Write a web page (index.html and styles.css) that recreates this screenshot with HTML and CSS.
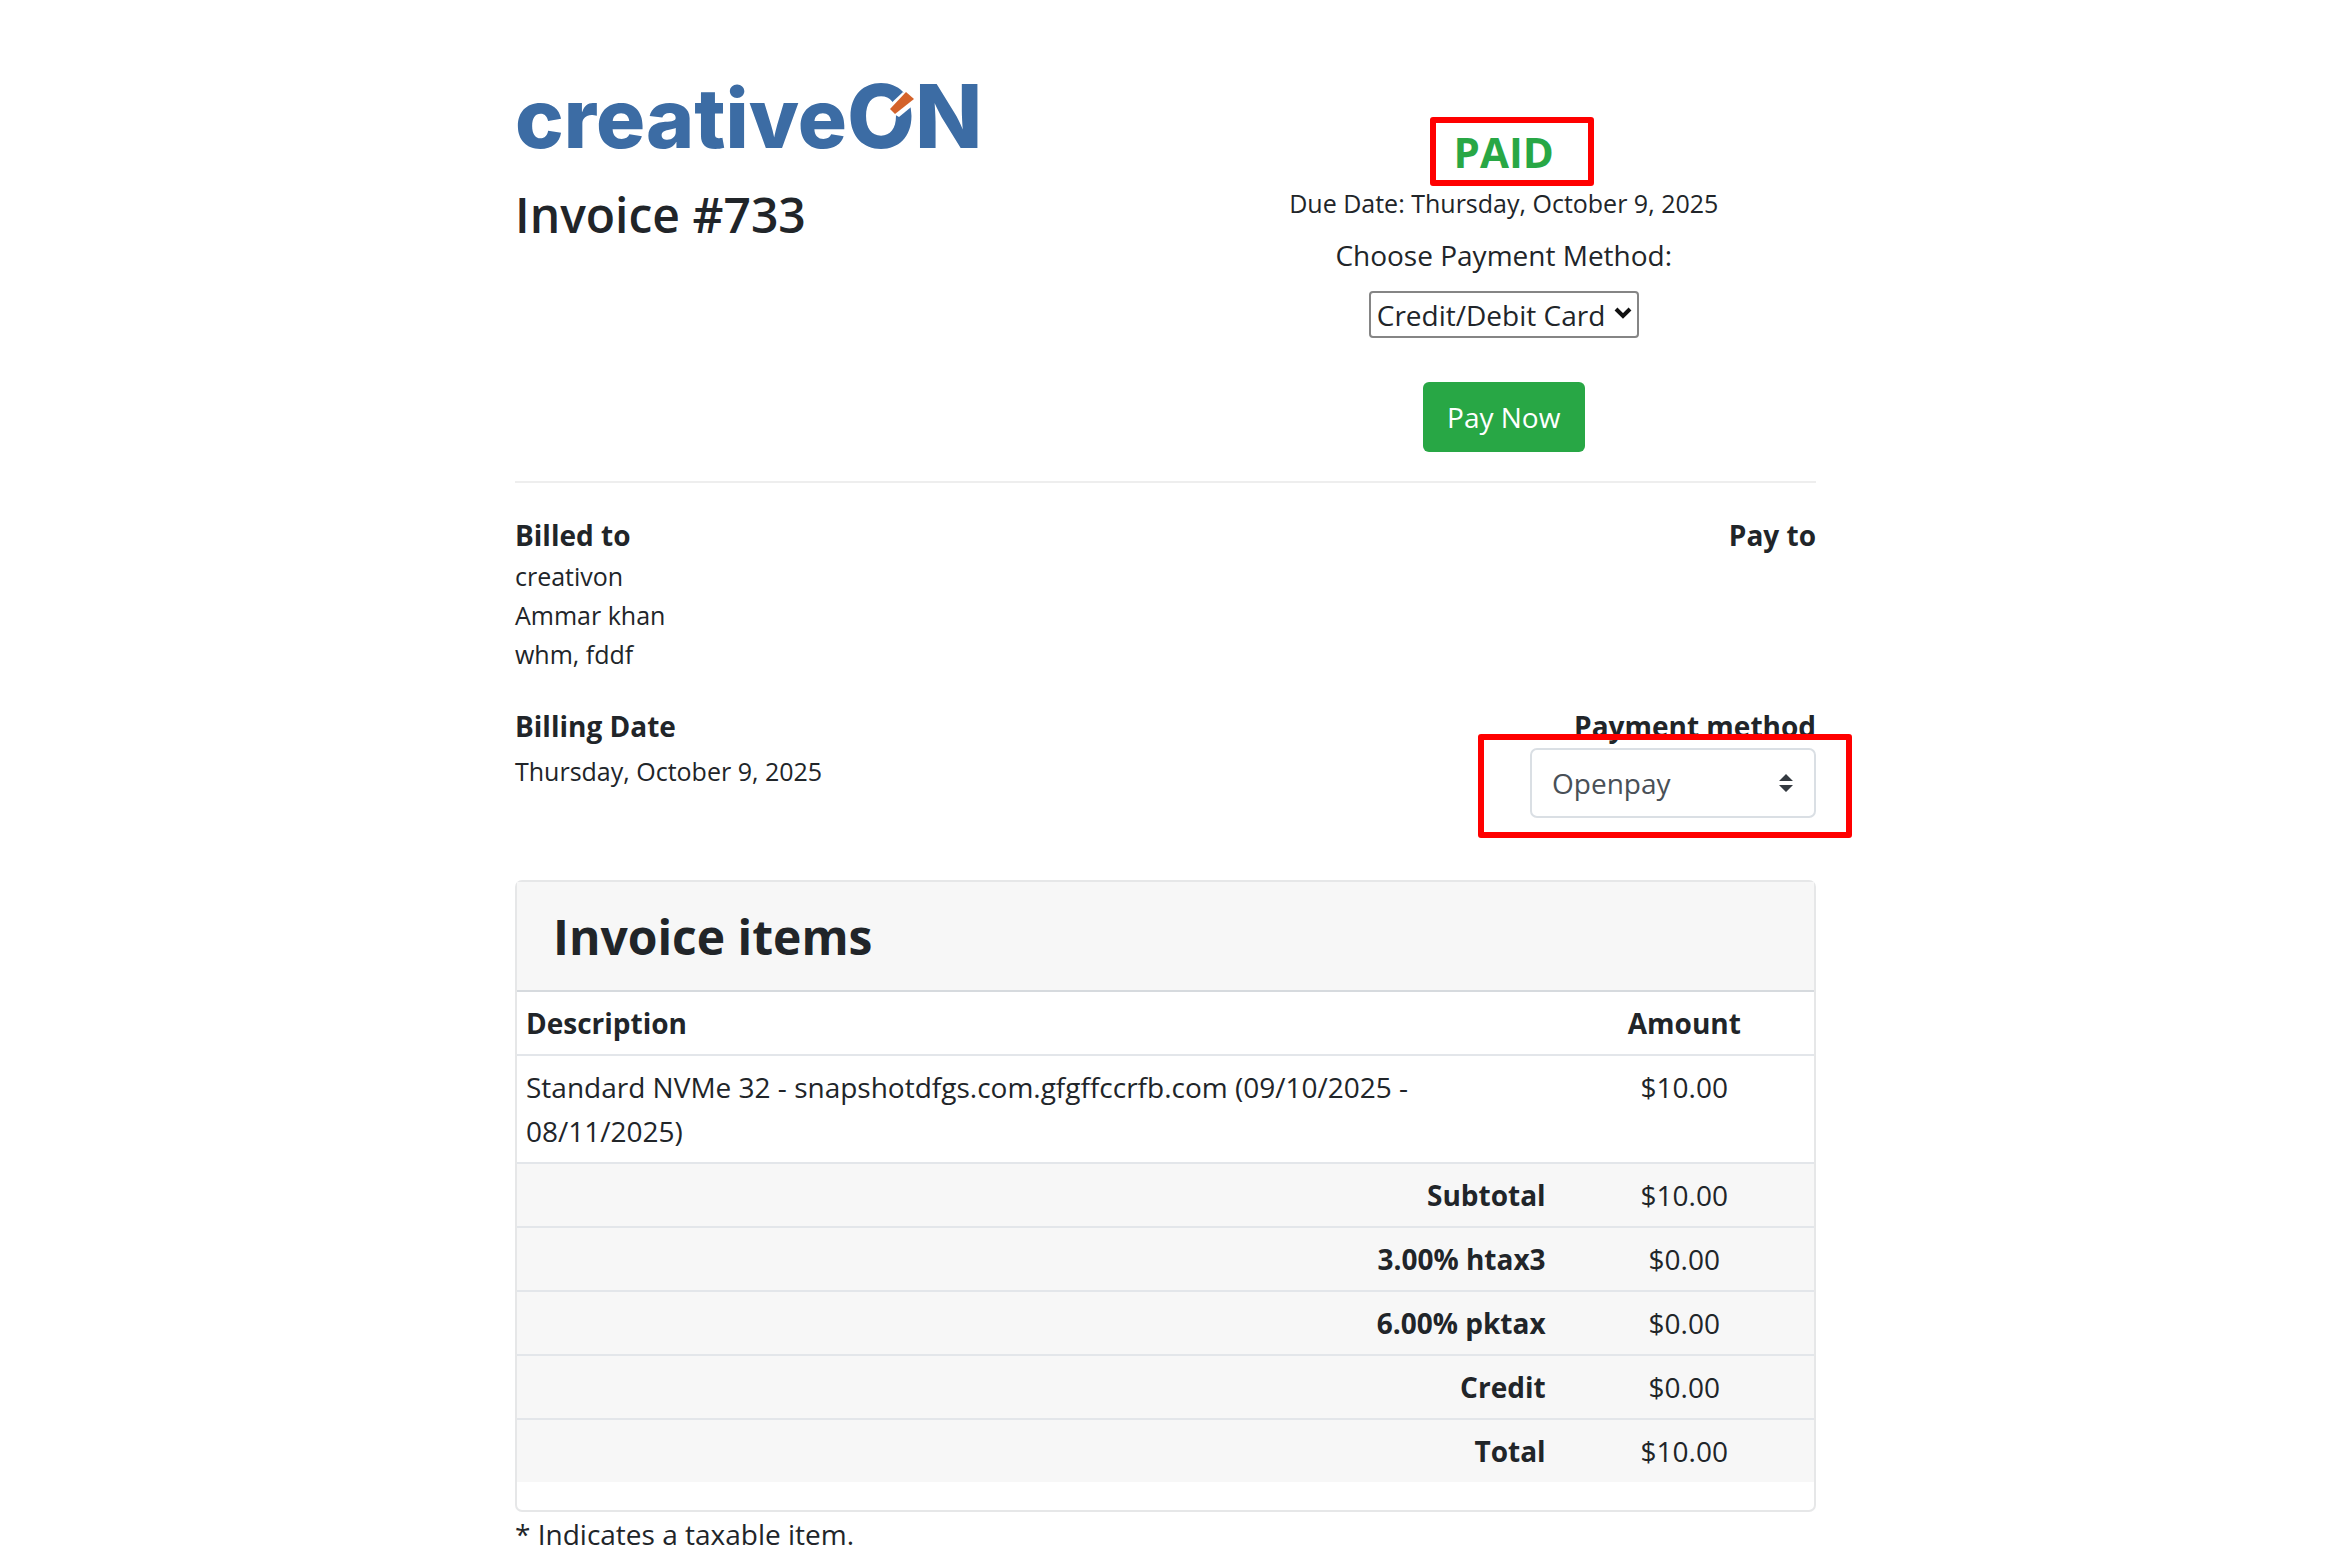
FILE: index.html
```
<!DOCTYPE html>
<html lang="en">
<head>
<meta charset="utf-8">
<title>Invoice #733</title>
<link rel="stylesheet" href="styles.css">
</head>
<body>
<main class="invoice">
  <header class="top">
    <div class="brand">
      <svg class="logo" viewBox="0 0 480 112" role="img" aria-label="creativeON">
        <text class="logo-word" x="0" y="90">creative</text>
        <text class="logo-on" x="332" y="90">ON</text>
        <path class="logo-gap" d="M370 51 L388 34 L401 45 L384 59 Z"/>
        <path class="logo-bar" d="M375 51 L391 34 L399 41 L380 56 Z"/>
      </svg>
      <h1 class="title">Invoice #733</h1>
    </div>
    <div class="payment">
      <div class="status"><strong>PAID</strong><span class="mark mark-status"></span></div>
      <p class="due">Due Date: Thursday, October 9, 2025</p>
      <label class="choose" for="pay-with">Choose Payment Method:</label>
      <div class="select-box">
        <select id="pay-with" class="plain-select"><option>Credit/Debit Card</option></select>
        <svg class="chevron" viewBox="0 0 18 12" aria-hidden="true"><path d="M2 2 L9 9 L16 2"/></svg>
      </div>
      <button class="pay" type="button">Pay Now</button>
    </div>
  </header>
  <hr class="rule">
  <section class="details">
    <div class="block">
      <strong class="heading">Billed to</strong>
      <address class="address">creativon<br>Ammar khan<br>whm, fddf</address>
    </div>
    <div class="block block-end"><strong class="heading">Pay to</strong></div>
    <div class="block">
      <strong class="heading">Billing Date</strong>
      <p class="date">Thursday, October 9, 2025</p>
    </div>
    <div class="block block-end">
      <label class="heading" for="gateway">Payment method</label>
      <div class="select-box gateway-box">
        <select id="gateway" class="custom-select"><option>Openpay</option></select>
        <svg class="sorter" viewBox="0 0 16 20" aria-hidden="true"><path d="M1 8 L8 1 L15 8 Z M1 12 L8 19 L15 12 Z"/></svg>
        <span class="mark mark-gateway"></span>
      </div>
    </div>
  </section>
  <section class="card">
    <h2 class="card-title">Invoice items</h2>
    <table class="items">
      <thead><tr><th scope="col">Description</th><th scope="col" class="amount">Amount</th></tr></thead>
      <tbody>
        <tr><td>Standard NVMe 32 - snapshotdfgs.com.gfgffccrfb.com (09/10/2025 - 08/11/2025)</td><td class="amount">$10.00</td></tr>
      </tbody>
      <tfoot>
        <tr><th scope="row">Subtotal</th><td class="amount">$10.00</td></tr>
        <tr><th scope="row">3.00% htax3</th><td class="amount">$0.00</td></tr>
        <tr><th scope="row">6.00% pktax</th><td class="amount">$0.00</td></tr>
        <tr><th scope="row">Credit</th><td class="amount">$0.00</td></tr>
        <tr><th scope="row">Total</th><td class="amount">$10.00</td></tr>
      </tfoot>
    </table>
  </section>
  <p class="note">* Indicates a taxable item.</p>
</main>
</body>
</html>
```
FILE: styles.css
```
* { box-sizing: border-box; }
body {
  margin: 0;
  padding: 0 13px 0 0;
  background: #fff;
  color: #212529;
  font: 28px/44px "Open Sans", "Noto Sans", sans-serif;
}
p, h1, h2, hr { margin: 0; }
.invoice { max-width: 1301px; margin: 0 auto; padding-top: 58px; }
.top { display: grid; grid-template-columns: 1fr 1fr; column-gap: 52px; }
.logo { display: block; width: 480px; height: 112px; }
.logo-word, .logo-on { fill: #3c6ca4; font-family: "Inter", sans-serif; font-weight: 800; }
.logo-word { font-size: 82px; }
.logo-on { font-size: 88px; }
.logo-gap { fill: #fff; }
.logo-bar { fill: #d4622a; }
.title { margin-top: 15px; font-size: 48px; line-height: 60px; font-weight: 600; }
.payment { display: flex; flex-direction: column; align-items: center; padding-top: 66px; }
.status { position: relative; color: #28a745; font-size: 42px; line-height: 56px; }
.mark { position: absolute; border: 6px solid #f00; border-radius: 3px; pointer-events: none; }
.mark-status { inset: -7px -40px -6px -24px; }
.due { font-size: 25px; line-height: 40px; margin-top: 3px; }
.choose { margin-top: 10px; }
.select-box { position: relative; display: flex; }
.plain-select, .custom-select { appearance: none; font: inherit; background: #fff; margin: 0; }
.plain-select { width: 270px; height: 47px; margin-top: 14px; padding: 0 6px; border: 2px solid #858585; border-radius: 4px; color: #212529; font-size: 28px; line-height: 40px; }
.chevron { position: absolute; right: 7px; top: 30px; width: 18px; height: 12px; fill: none; stroke: #111; stroke-width: 4px; }
.pay { margin-top: 44px; width: 162px; height: 70px; padding: 0; border: 0; border-radius: 6px; background: #28a745; color: #fff; font: inherit; }
.rule { margin-top: 29px; border: 0; border-top: 2px solid #eee; }
.details { display: grid; grid-template-columns: 1fr 1fr; row-gap: 30px; padding-top: 30px; }
.block-end { display: flex; flex-direction: column; align-items: flex-end; }
.heading { display: block; font-weight: 700; }
.address { font-size: 25px; line-height: 39px; font-style: normal; }
.date { font-size: 25px; line-height: 46px; }
.custom-select { width: 286px; height: 70px; padding: 0 20px; border: 2px solid #dadfe4; border-radius: 7px; color: #495057; font-size: 28px; }
.sorter { position: absolute; right: 22px; top: 25px; width: 16px; height: 20px; fill: #343a40; }
.mark-gateway { inset: -14px -36px -20px -52px; }
.card { margin-top: 62px; padding-bottom: 28px; border: 2px solid #e6e7e8; border-radius: 7px; }
.card-title { padding: 26px 36px 24px; background: #f7f7f7; font-size: 48px; line-height: 58px; font-weight: 700; }
.items { width: 100%; table-layout: fixed; border-collapse: collapse; }
.items th, .items td { padding: 9px; border-top: 2px solid #e3e6ea; text-align: left; vertical-align: top; }
.items thead th { border-top-color: #d6dade; }
.items tfoot { background: #f7f7f7; }
.items tfoot th { text-align: right; }
.items .amount { width: 20%; text-align: center; }
```
